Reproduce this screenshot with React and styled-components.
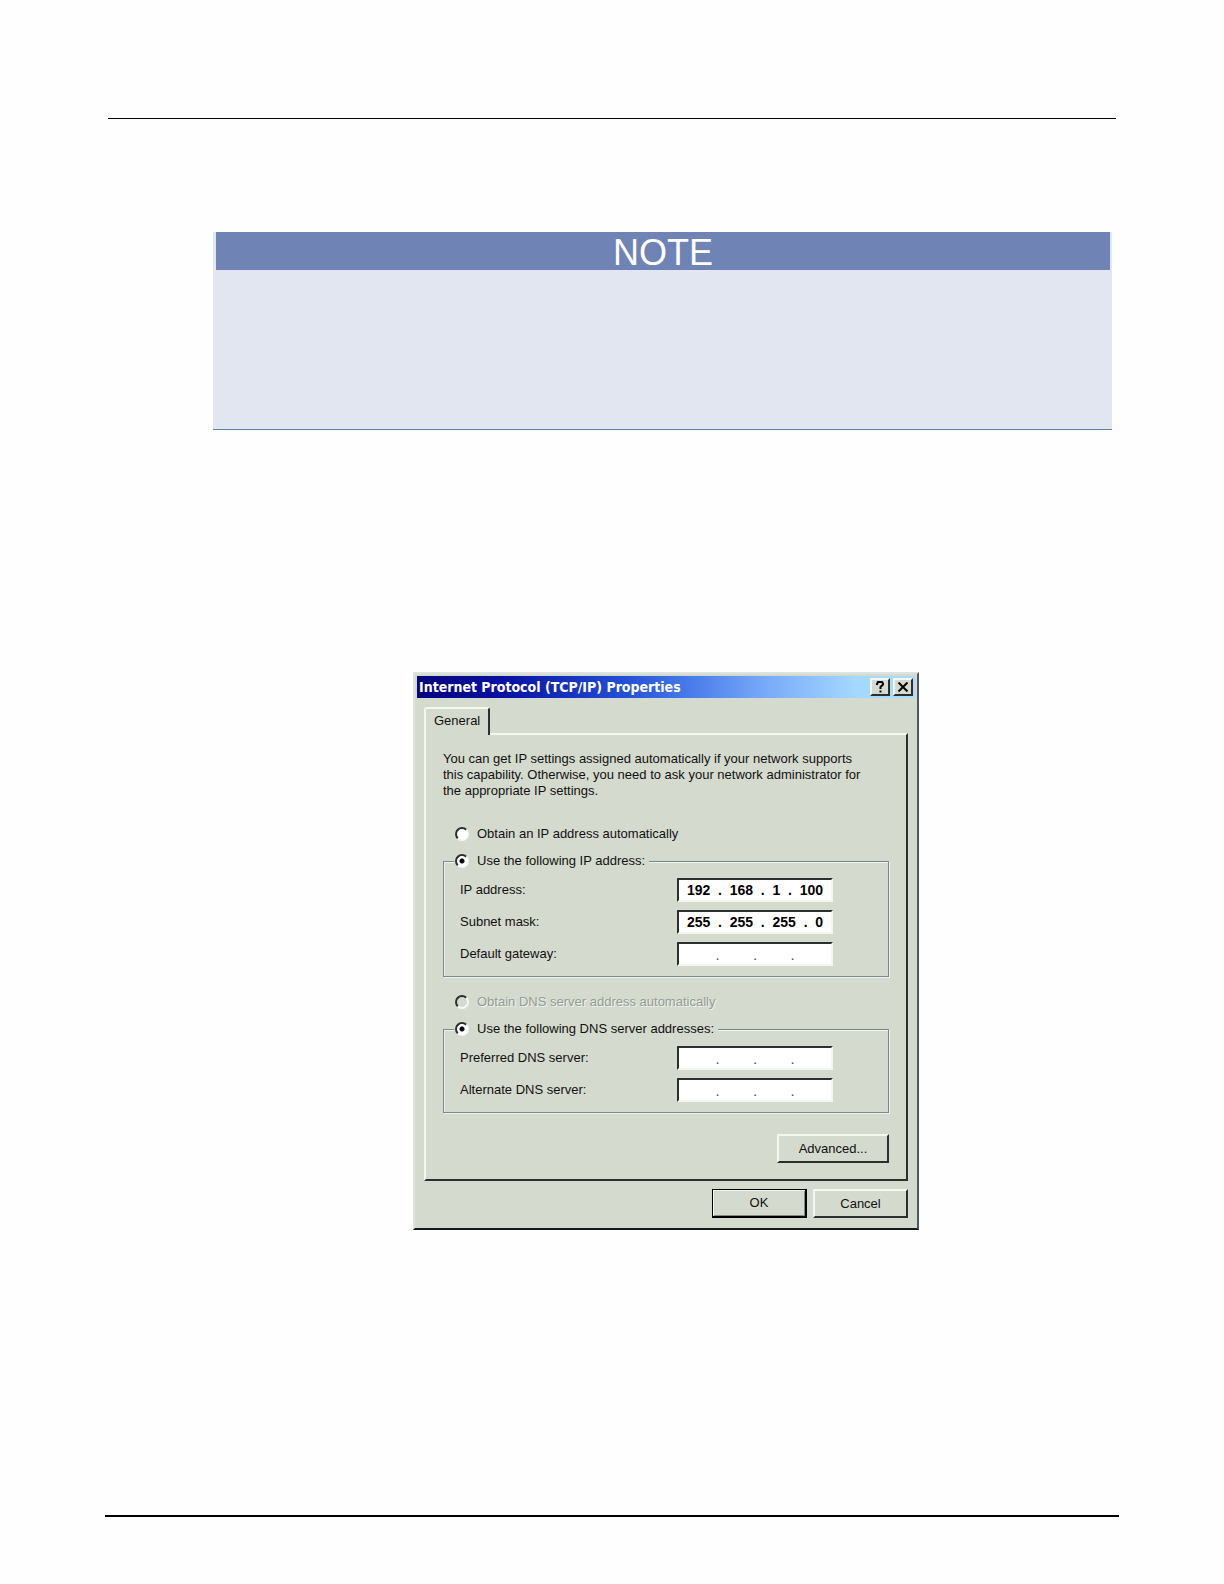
import React, { useState } from 'react';
import styled, { createGlobalStyle, css } from 'styled-components';

const FACE = '#d5dace';
const LIGHT = '#f3f7ee';
const DARK = '#2b302f';
const SANS = "'Liberation Sans', Arial, sans-serif";

const GlobalStyle = createGlobalStyle`
  *, *::before, *::after {
    box-sizing: border-box;
  }
  body {
    margin: 0;
    background: #fefefe;
    color: #111;
    font-family: ${SANS};
  }
`;

const Page = styled.main`
  display: flex;
  flex-direction: column;
  padding: 118px 0 67px;
`;

const HeaderRule = styled.hr`
  margin: 0 108px;
  border: 0;
  border-top: 1px solid #000;
`;

const FooterRule = styled.hr`
  margin: 0 105px;
  border: 0;
  border-top: 2px solid #000;
`;

const Note = styled.section`
  min-height: 198px;
  margin: 113px 112px 0 213px;
  padding: 0 2px 0 3px;
  background: #e1e6f1;
  border-bottom: 1px solid #5b82ab;
`;

const NoteTitle = styled.h2`
  margin: 0;
  padding-top: 3px;
  background: #7083b5;
  color: #fff;
  font-size: 36px;
  font-weight: 400;
  line-height: 35px;
  text-align: center;
`;

const Figure = styled.figure`
  display: flex;
  justify-content: center;
  margin: 242px 105px 285px 213px;
`;

const Dialog = styled.div`
  width: 100%;
  max-width: 506px;
  padding: 2px;
  background: ${FACE};
  border: 2px solid;
  border-color: #dfe3df #4c5a60 #15191a #dfe3df;
  font-size: 13px;
  line-height: 16px;
`;

const TitleBar = styled.header`
  display: flex;
  align-items: center;
  gap: 3px;
  height: 22px;
  padding: 0 2px;
  background: linear-gradient(
    90deg,
    #04047c 0%,
    #0812a4 18%,
    #2450d8 42%,
    #4678ea 54%,
    #78aaf8 70%,
    #a4d8ff 88%,
    #a9dcff 100%
  );
`;

const Title = styled.h1`
  flex: 1;
  margin: 0;
  color: #fff;
  font-family: 'DejaVu Sans Condensed', 'DejaVu Sans', sans-serif;
  font-size: 14px;
  font-weight: 700;
  line-height: 16px;
  white-space: nowrap;
`;

const raised = css`
  background: ${FACE};
  border: 2px solid;
  border-color: ${LIGHT} ${DARK} ${DARK} ${LIGHT};
`;

const TitleButton = styled.button`
  ${raised}
  display: flex;
  align-items: center;
  justify-content: center;
  width: 20px;
  height: 18px;
  padding: 0;
  color: #000;
`;

const Body = styled.div`
  padding: 9px 7px 8px;
`;

const Tab = styled.button`
  position: relative;
  display: block;
  height: 28px;
  margin-bottom: -2px;
  padding: 0 8px 2px;
  background: ${FACE};
  border: 2px solid;
  border-color: ${LIGHT} ${DARK} ${FACE} ${LIGHT};
  border-bottom: 0;
  border-radius: 3px 3px 0 0;
  color: #111;
  font: inherit;
`;

const Panel = styled.div`
  ${raised}
  padding: 16px 17px;
`;

const Intro = styled.p`
  margin: 0 0 27px;
`;

const RadioLabel = styled.label`
  display: flex;
  align-items: center;
  gap: 8px;
  height: 16px;
  padding-left: 12px;
  ${({ $inLegend }) => $inLegend && 'height: 18px; padding: 0 4px 0 1px;'}
  ${({ $disabled }) =>
    $disabled && 'color: #929c96; text-shadow: 1px 1px 0 #f0f4ec;'}
`;

const Radio = styled.input`
  appearance: none;
  flex: none;
  width: 14px;
  height: 14px;
  margin: 0;
  border: 2px solid;
  border-color: ${DARK} #f6f9f3 #f6f9f3 ${DARK};
  border-radius: 50%;
  background: #fff;
  &:checked {
    background: radial-gradient(circle, #000 0 2px, #fff 3px);
  }
  &:disabled {
    background: ${FACE};
  }
`;

const Group = styled.fieldset`
  min-width: 0;
  margin: 10px 0 17px;
  padding: 8px 16px 10px;
  border: 1px solid #7c8789;
  box-shadow: 1px 1px 0 #edf3ee, inset 1px 1px 0 #edf3ee;
`;

const Legend = styled.legend`
  margin-left: -6px;
  padding: 0;
  background: ${FACE};
`;

const Fields = styled.div`
  display: grid;
  gap: 8px;
`;

const FieldRow = styled.div`
  display: grid;
  grid-template-columns: 217px 156px;
  align-items: center;
`;

const AddressInput = styled.input`
  width: 100%;
  height: 24px;
  padding: 0;
  background: #fff;
  border: 2px solid;
  border-color: ${DARK} ${LIGHT} ${LIGHT} ${DARK};
  border-radius: 0;
  color: ${({ $filled }) => ($filled ? '#000' : '#555')};
  font-family: ${SANS};
  font-size: ${({ $filled }) => ($filled ? '14px' : '15px')};
  font-weight: ${({ $filled }) => ($filled ? 700 : 400)};
  text-align: center;
`;

const ButtonRow = styled.div`
  display: flex;
  justify-content: flex-end;
  gap: 6px;
  margin-top: ${({ $gap }) => $gap};
`;

const Button = styled.button`
  ${raised}
  width: ${({ $wide }) => ($wide ? '112px' : '95px')};
  height: 29px;
  padding: 0;
  color: #111;
  font: inherit;
  ${({ $primary }) =>
    $primary &&
    css`
      border-color: #000;
      border-width: 1px 2px 2px 1px;
      box-shadow: inset 1px 1px 0 ${LIGHT}, inset -1px -1px 0 #858d86;
    `}
`;

// separators only, shown while no octet has been typed
const EMPTY = '.        .        .';

const IP_FIELDS = [
  { id: 'ip', label: 'IP address:', value: '192  .  168  .  1  .  100' },
  { id: 'mask', label: 'Subnet mask:', value: '255  .  255  .  255  .  0' },
  { id: 'gateway', label: 'Default gateway:', value: EMPTY },
];

const DNS_FIELDS = [
  { id: 'dns1', label: 'Preferred DNS server:', value: EMPTY },
  { id: 'dns2', label: 'Alternate DNS server:', value: EMPTY },
];

function AddressField({ id, label, value }) {
  const [text, setText] = useState(value);
  return (
    <FieldRow>
      <label htmlFor={id}>{label}</label>
      <AddressInput
        id={id}
        type="text"
        value={text}
        $filled={text !== EMPTY}
        onChange={e => setText(e.target.value)}
      />
    </FieldRow>
  );
}

function AddressGroup({ name, legend, fields }) {
  return (
    <Group>
      <Legend>
        <RadioLabel $inLegend>
          <Radio type="radio" name={name} defaultChecked />
          {legend}
        </RadioLabel>
      </Legend>
      <Fields>
        {fields.map(f => (
          <AddressField key={f.id} {...f} />
        ))}
      </Fields>
    </Group>
  );
}

function HelpIcon() {
  return (
    <svg width="10" height="12" viewBox="0 0 10 12" fill="none" aria-hidden="true">
      <path
        d="M2 4V3l1-2h4l1 1.5v1L5.5 6v2"
        stroke="currentColor"
        strokeWidth="2"
      />
      <path d="M4.5 9.5h2v2h-2z" fill="currentColor" />
    </svg>
  );
}

function CloseIcon() {
  return (
    <svg width="12" height="10" viewBox="0 0 12 10" fill="none" aria-hidden="true">
      <path d="M1.5 .5l9 9M10.5 .5l-9 9" stroke="currentColor" strokeWidth="2" />
    </svg>
  );
}

function TcpIpDialog() {
  return (
    <Dialog role="dialog" aria-labelledby="dialog-title">
      <TitleBar>
        <Title id="dialog-title">Internet Protocol (TCP/IP) Properties</Title>
        <TitleButton type="button" aria-label="Help">
          <HelpIcon />
        </TitleButton>
        <TitleButton type="button" aria-label="Close">
          <CloseIcon />
        </TitleButton>
      </TitleBar>
      <Body>
        <Tab type="button">General</Tab>
        <Panel>
          <Intro>
            You can get IP settings assigned automatically if your network supports
            <br />
            this capability. Otherwise, you need to ask your network administrator for
            <br />
            the appropriate IP settings.
          </Intro>
          <RadioLabel>
            <Radio type="radio" name="ip-mode" />
            Obtain an IP address automatically
          </RadioLabel>
          <AddressGroup
            name="ip-mode"
            legend="Use the following IP address:"
            fields={IP_FIELDS}
          />
          <RadioLabel $disabled>
            <Radio type="radio" name="dns-mode" disabled />
            Obtain DNS server address automatically
          </RadioLabel>
          <AddressGroup
            name="dns-mode"
            legend="Use the following DNS server addresses:"
            fields={DNS_FIELDS}
          />
          <ButtonRow $gap="21px">
            <Button type="button" $wide>
              Advanced...
            </Button>
          </ButtonRow>
        </Panel>
        <ButtonRow $gap="8px">
          <Button type="button" $primary>
            OK
          </Button>
          <Button type="button">Cancel</Button>
        </ButtonRow>
      </Body>
    </Dialog>
  );
}

export default function App() {
  return (
    <>
      <GlobalStyle />
      <Page>
        <HeaderRule />
        <Note>
          <NoteTitle>NOTE</NoteTitle>
        </Note>
        <Figure>
          <TcpIpDialog />
        </Figure>
        <FooterRule />
      </Page>
    </>
  );
}
